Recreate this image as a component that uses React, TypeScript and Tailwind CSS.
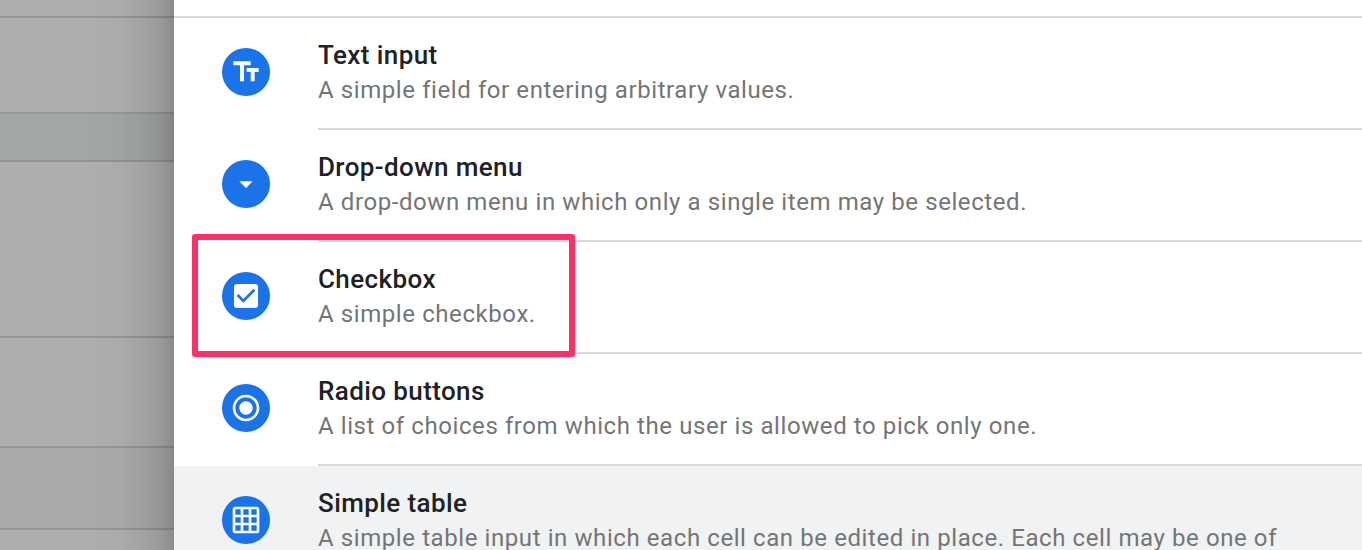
const items = [
  {
    title: 'Text input',
    text: 'A simple field for entering arbitrary values.',
    path: 'M2.5 4v3h5v12h3V7h5V4h-13zm19 5h-9v3h3v7h3v-7h3V9z',
  },
  {
    title: 'Drop-down menu',
    text: 'A drop-down menu in which only a single item may be selected.',
    path: 'M7 10l5 5 5-5z',
  },
  {
    title: 'Checkbox',
    text: 'A simple checkbox.',
    path: 'M19 3H5c-1.11 0-2 .9-2 2v14c0 1.1.89 2 2 2h14c1.11 0 2-.9 2-2V5c0-1.1-.89-2-2-2zm-9 14l-5-5 1.41-1.41L10 14.17l7.59-7.59L19 8l-9 9z',
    marked: true,
  },
  {
    title: 'Radio buttons',
    text: 'A list of choices from which the user is allowed to pick only one.',
    path: 'M12 7c-2.76 0-5 2.24-5 5s2.24 5 5 5 5-2.24 5-5-2.24-5-5-5zm0-5C6.48 2 2 6.48 2 12s4.48 10 10 10 10-4.48 10-10S17.52 2 12 2zm0 18c-4.42 0-8-3.58-8-8s3.58-8 8-8 8 3.58 8 8-3.58 8-8 8z',
  },
  {
    title: 'Simple table',
    text: 'A simple table input in which each cell can be edited in place. Each cell may be one of',
    path: 'M20 2H4c-1.1 0-2 .9-2 2v16c0 1.1.9 2 2 2h16c1.1 0 2-.9 2-2V4c0-1.1-.9-2-2-2zM8 20H4v-4h4v4zm0-6H4v-4h4v4zm0-6H4V4h4v4zm6 12h-4v-4h4v4zm0-6h-4v-4h4v4zm0-6h-4V4h4v4zm6 12h-4v-4h4v4zm0-6h-4v-4h4v4zm0-6h-4V4h4v4z',
    active: true,
  },
];

function Backdrop() {
  return (
    <div className="relative flex w-[174px] shrink-0 flex-col bg-[#aeaeae]">
      <div className="h-[18px] border-b-2 border-[#959595]" />
      <div className="h-[96px] border-b-2 border-[#959595]" />
      <div className="h-[48px] border-b-2 border-[#919393] bg-[#a2a6a4]" />
      <div className="h-[176px] border-b-2 border-[#959595]" />
      <div className="h-[110px] border-b-2 border-[#959595]" />
      <div className="h-[82px] border-b-2 border-[#959595] bg-[#a8aaab]" />
      <div className="absolute inset-y-0 right-0 w-[84px] bg-[linear-gradient(to_right,transparent,rgba(0,0,0,0.02)_35%,rgba(0,0,0,0.07)_66%,rgba(0,0,0,0.13)_86%,rgba(0,0,0,0.2))]" />
    </div>
  );
}

function Row({ item }: { item: (typeof items)[number] }) {
  return (
    <li className={`relative flex h-[112px] shrink-0 gap-12 pl-12 ${item.active ? 'bg-[#f1f2f4]' : ''}`}>
      <div className="mt-[30px] flex size-12 shrink-0 items-center justify-center rounded-full bg-[#1a73e8]">
        <svg viewBox="0 0 24 24" className="size-8 fill-white">
          <path d={item.path} />
        </svg>
      </div>
      <div className="min-w-0 flex-1 border-b-2 border-[#dadada] pt-5 whitespace-nowrap">
        <h3 className="text-[26px] leading-[34px] font-medium tracking-[0.4px] text-[#202124]">{item.title}</h3>
        <p className="pt-0.5 text-[24px] leading-[32px] tracking-[0.585px] text-[#757575]">{item.text}</p>
      </div>
      {item.marked && (
        <div className="absolute -top-[8px] left-[18px] h-[123px] w-[383px] rounded-[3px] border-6 border-[#fc2f6e]" />
      )}
    </li>
  );
}

export default function App() {
  return (
    <div className="flex h-[550px] w-[1362px] overflow-hidden bg-white font-['Roboto',sans-serif]">
      <Backdrop />
      <main className="flex min-w-0 flex-1 flex-col overflow-hidden bg-white">
        <div className="h-[18px] shrink-0 border-b-2 border-[#dadada]" />
        <ul className="flex flex-col">
          {items.map((item) => (
            <Row key={item.title} item={item} />
          ))}
        </ul>
      </main>
    </div>
  );
}
